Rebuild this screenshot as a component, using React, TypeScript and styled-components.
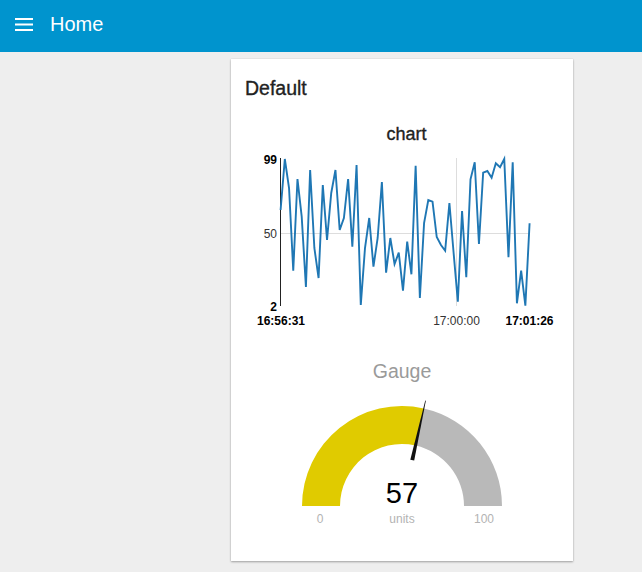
import React from "react";
import styled, { createGlobalStyle } from "styled-components";

const GlobalStyle = createGlobalStyle`
  html, body {
    margin: 0;
    padding: 0;
    background: #eeeeee;
    font-family: "Liberation Sans", Arial, Helvetica, sans-serif;
  }
`;

const Page = styled.div`
  width: 642px;
  min-height: 572px;
  background: #eeeeee;
`;

const Header = styled.header`
  height: 52px;
  box-sizing: border-box;
  padding: 0 0 3px 15px;
  background: #0094ce;
  display: flex;
  align-items: center;
  color: #ffffff;
`;

const MenuButton = styled.svg`
  width: 18px;
  height: 14px;
  display: block;
`;

const HeaderTitle = styled.h1`
  margin: 0 0 0 17px;
  font-size: 20px;
  font-weight: 400;
  line-height: 23px;
`;

const Main = styled.main`
  padding: 7px 0 0 231px;
`;

const Card = styled.section`
  width: 342px;
  height: 502px;
  background: #ffffff;
  box-shadow: 0 1px 2px rgba(0, 0, 0, 0.32), 0 0 1px rgba(0, 0, 0, 0.12);
  display: flex;
  flex-direction: column;
`;

const CardTitle = styled.h2`
  margin: 17px 14px 0;
  font-size: 19.5px;
  font-weight: 400;
  line-height: 24px;
  color: #222222;
  -webkit-text-stroke: 0.35px #222222;
`;

const ChartBlock = styled.div`
  margin: 24px 0 0 10px;
  width: 331px;
  display: flex;
  flex-direction: column;
`;

const WidgetTitle = styled.div<{ $muted?: boolean }>`
  text-align: center;
  font-size: ${(p) => (p.$muted ? "19.5px" : "18px")};
  line-height: ${(p) => (p.$muted ? "24px" : "20px")};
  color: ${(p) => (p.$muted ? "#9a9a9a" : "#222222")};
  -webkit-text-stroke: ${(p) => (p.$muted ? "0" : "0.35px #222222")};
`;

const ChartSvg = styled.svg`
  display: block;
  width: 331px;
  height: 186px;
`;

const GaugeBlock = styled.div`
  margin-top: 29px;
  display: flex;
  flex-direction: column;
`;

const GaugeSvg = styled.svg`
  display: block;
  width: 342px;
  height: 160px;
`;

const ys = [
  210, 159, 188, 270.7, 179, 216.7, 287, 170, 248, 278, 185, 240, 193, 170, 230,
  218, 179, 246.7, 165, 305, 248, 218, 266.7, 238, 182, 272.7, 238, 264, 252.7,
  290.7, 241.7, 274.3, 165.7, 298, 223, 200, 201.7, 237, 245, 250.7, 203, 253,
  301.7, 211, 277.3, 179.3, 162.3, 244, 172.7, 171, 177.7, 163.3, 167.3, 159,
  257.3, 162.3, 303.3, 270.7, 305.7, 223.3,
];

const points = ys
  .map((y, i) => `${(280.6 + i * 4.22).toFixed(2)},${y}`)
  .join(" ");

function Chart() {
  return (
    <ChartSvg viewBox="241 144 331 186">
      <line x1={280} y1={233.5} x2={530} y2={233.5} stroke="#dddddd" strokeWidth={1} />
      <line x1={456.5} y1={158} x2={456.5} y2={306} stroke="#dddddd" strokeWidth={1} />
      <line x1={280.5} y1={158} x2={280.5} y2={306} stroke="#222222" strokeWidth={1} />
      <polyline
        points={points}
        fill="none"
        stroke="#1f77b4"
        strokeWidth={1.9}
        strokeLinejoin="miter"
      />
      <g fontFamily='"Liberation Sans", Arial, sans-serif' fontSize={12} fill="#000000">
        <text x={277} y={163.5} textAnchor="end" fontWeight={700}>99</text>
        <text x={277} y={237.5} textAnchor="end" fill="#333333">50</text>
        <text x={277} y={310.5} textAnchor="end" fontWeight={700}>2</text>
        <text x={281} y={324.5} textAnchor="middle" fontWeight={700}>16:56:31</text>
        <text x={456.5} y={324.5} textAnchor="middle" fill="#333333">17:00:00</text>
        <text x={529.5} y={324.5} textAnchor="middle" fontWeight={700}>17:01:26</text>
      </g>
    </ChartSvg>
  );
}

function Gauge({ value, min, max }: { value: number; min: number; max: number }) {
  const cx = 402;
  const cy = 506;
  const ro = 100;
  const ri = 62;
  const frac = (value - min) / (max - min);
  const th = Math.PI - frac * Math.PI;
  const c = Math.cos(th);
  const s = Math.sin(th);
  const ox = cx + ro * c;
  const oy = cy - ro * s;
  const ix = cx + ri * c;
  const iy = cy - ri * s;
  const yellow = `M${cx - ro} ${cy} A${ro} ${ro} 0 0 1 ${ox} ${oy} L${ix} ${iy} A${ri} ${ri} 0 0 0 ${cx - ri} ${cy} Z`;
  const grey = `M${ox} ${oy} A${ro} ${ro} 0 0 1 ${cx + ro} ${cy} L${cx + ri} ${cy} A${ri} ${ri} 0 0 0 ${ix} ${iy} Z`;
  const rb = 47;
  const rt = 108;
  const px = s;
  const py = c;
  const bx = cx + rb * c;
  const by = cy - rb * s;
  const tx = cx + rt * c;
  const ty = cy - rt * s;
  const needle = `M${bx + 2 * px} ${by + 2 * py} L${tx + 0.3 * px} ${ty + 0.3 * py} L${tx - 0.3 * px} ${ty - 0.3 * py} L${bx - 2 * px} ${by - 2 * py} Z`;
  return (
    <GaugeSvg viewBox="231 383 342 160">
      <path d={yellow} fill="#e0cb00" />
      <path d={grey} fill="#b9b9b9" />
      <path d={needle} fill="#111111" />
      <g fontFamily='"Liberation Sans", Arial, sans-serif' textAnchor="middle">
        <text x={cx} y={503} fontSize={29} fill="#000000">{value}</text>
        <text x={320} y={523} fontSize={12} fill="#b3b3b3">{min}</text>
        <text x={cx} y={523} fontSize={12} fill="#b3b3b3">units</text>
        <text x={484} y={523} fontSize={12} fill="#b3b3b3">{max}</text>
      </g>
    </GaugeSvg>
  );
}

export default function App() {
  return (
    <Page>
      <GlobalStyle />
      <Header>
        <MenuButton viewBox="0 0 18 14">
          <rect x={0} y={0} width={18} height={2} fill="#ffffff" />
          <rect x={0} y={5.5} width={18} height={2} fill="#ffffff" />
          <rect x={0} y={11} width={18} height={2} fill="#ffffff" />
        </MenuButton>
        <HeaderTitle>Home</HeaderTitle>
      </Header>
      <Main>
        <Card>
          <CardTitle>Default</CardTitle>
          <ChartBlock>
            <WidgetTitle>chart</WidgetTitle>
            <Chart />
          </ChartBlock>
          <GaugeBlock>
            <WidgetTitle $muted>Gauge</WidgetTitle>
            <Gauge value={57} min={0} max={100} />
          </GaugeBlock>
        </Card>
      </Main>
    </Page>
  );
}
